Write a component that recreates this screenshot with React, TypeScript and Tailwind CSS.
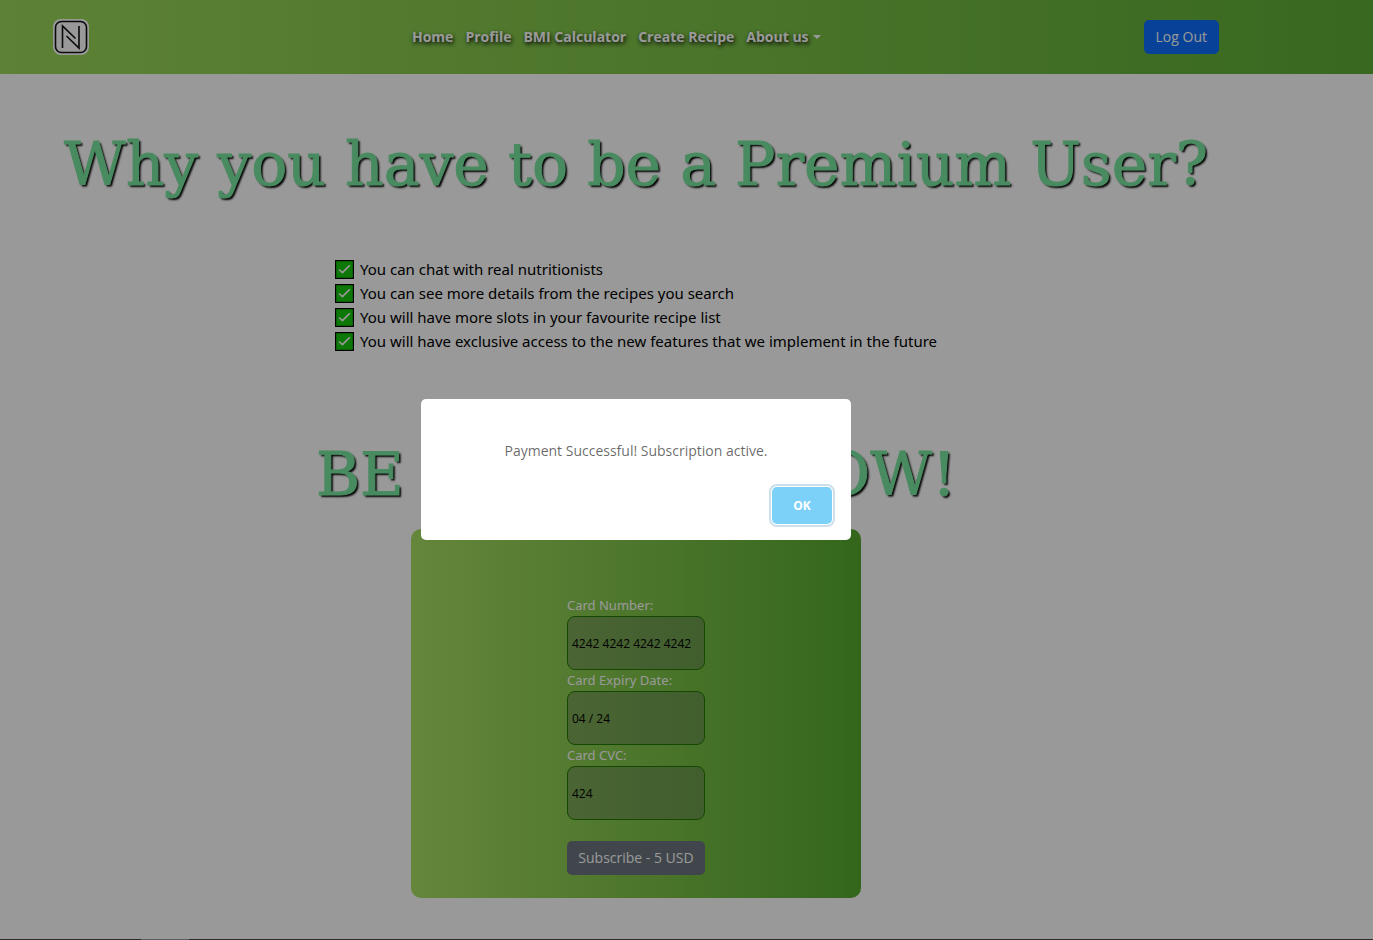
import type { ReactNode } from 'react';

const links = ['Home', 'Profile', 'BMI Calculator', 'Create Recipe'];

const benefits = [
  'You can chat with real nutritionists',
  'You can see more details from the recipes you search',
  'You will have more slots in your favourite recipe list',
  'You will have exclusive access to the new features that we implement in the future',
];

const fields = [
  { id: 'card-number', label: 'Card Number:', value: '4242 4242 4242 4242' },
  { id: 'card-expiry', label: 'Card Expiry Date:', value: '04 / 24' },
  { id: 'card-cvc', label: 'Card CVC:', value: '424' },
];

function Logo() {
  return (
    <svg viewBox="0 0 36 36" className="block size-9" aria-hidden="true">
      <rect x="0" y="0" width="36" height="36" rx="8" fill="#fff" />
      <rect x="2.5" y="2.5" width="31" height="31" rx="6" fill="none" stroke="#111" strokeWidth="1.6" />
      <path d="M9.5 29V7L22.5 19.5M26 7V29L13.5 17" fill="none" stroke="#111" strokeWidth="1.6" />
    </svg>
  );
}

function CheckIcon() {
  return (
    <svg viewBox="0 0 19 19" className="size-[19px] shrink-0" aria-hidden="true">
      <rect x="0.6" y="0.6" width="17.8" height="17.8" fill="#16c60c" stroke="#000" strokeWidth="1.2" />
      <path d="M4 9.5L7.4 12.6L14.8 5.4" fill="none" stroke="#fff" strokeWidth="1.5" />
    </svg>
  );
}

function Title({ children }: { children: ReactNode }) {
  return (
    <h1 className="text-center font-['DejaVu_Serif',serif] text-[60px] leading-[72px] whitespace-nowrap text-[#7be8a0] [-webkit-text-stroke:1px_#7be8a0] [text-shadow:2px_2px_2px_#000]">
      {children}
    </h1>
  );
}

export default function App() {
  return (
    <div className="min-h-screen bg-white font-['Open_Sans','Noto_Sans',sans-serif] text-sm text-[#212529]">
      <header className="bg-linear-to-r from-[#9bd959] to-[#5fae36] pr-[101px]">
        <nav className="flex h-[74px] items-center justify-between px-[53px]">
          <a href="#home" aria-label="Nutrition home">
            <Logo />
          </a>
          <ul className="flex gap-3 font-bold text-white [text-shadow:1px_2px_4px_#000]">
            {links.map((link) => (
              <li key={link}>
                <a href="#nav">{link}</a>
              </li>
            ))}
            <li>
              <button type="button" className="flex items-center gap-1 [text-shadow:inherit]">
                About us
                <svg viewBox="0 0 8 4" className="h-1 w-2" aria-hidden="true">
                  <path d="M0 0H8L4 4Z" fill="#fff" />
                </svg>
              </button>
            </li>
          </ul>
          <button type="button" className="h-[34px] rounded-[5px] bg-[#0d6efd] px-3 text-white">
            Log Out
          </button>
        </nav>
      </header>

      <main className="flex flex-col items-center pt-[54px] pr-[101px] pb-[42px]">
        <Title>Why you have to be a Premium User?</Title>

        <ul className="mt-[57px] font-['Noto_Sans',sans-serif] text-[15px] leading-6 text-black">
          {benefits.map((benefit) => (
            <li key={benefit} className="flex items-center gap-[6px]">
              <CheckIcon />
              {benefit}
            </li>
          ))}
        </ul>

        <div className="mt-[85px]">
          <Title>BE PREMIUM NOW!</Title>
        </div>

        <form className="mt-[19px] flex w-[450px] justify-center rounded-[10px] bg-linear-to-r from-[#a8e063] to-[#56ab2f] pt-[66px] pb-[23px]">
          <div className="flex w-[138px] flex-col">
            {fields.map((field) => (
              <div key={field.id} className="flex flex-col">
                <label
                  htmlFor={field.id}
                  className="font-['Noto_Sans',sans-serif] text-[13px] leading-[21px] whitespace-nowrap text-white"
                >
                  {field.label}
                </label>
                <input
                  id={field.id}
                  defaultValue={field.value}
                  className="h-[54px] w-full rounded-lg border border-[#237804] bg-[#606060]/35 px-1 text-xs text-black"
                />
              </div>
            ))}
            <button type="button" className="mt-[21px] h-[34px] rounded-[5px] bg-[#6c757d] whitespace-nowrap text-white">
              Subscribe - 5 USD
            </button>
          </div>
        </form>
      </main>

      <div className="fixed inset-0 flex items-center justify-center bg-black/40 pr-[101px] pb-px">
        <div role="dialog" aria-modal="true" aria-label="Payment status" className="w-[430px] rounded-[5px] bg-white px-[19px] pt-[42px] pb-4">
          <p className="text-center leading-5 text-black/60">Payment Successful! Subscription active.</p>
          <div className="mt-[26px] flex justify-end">
            <button
              type="button"
              className="h-[37px] w-[60px] rounded-[5px] bg-[#7cd1f9] text-xs font-bold text-white shadow-[0_0_0_1px_#fff,0_0_0_3px_#cddfed]"
            >
              OK
            </button>
          </div>
        </div>
      </div>

      <div className="fixed inset-x-0 bottom-0 flex h-px bg-[#2b2a33]">
        <span className="ml-[141px] w-12 bg-[#5b5b66]" />
      </div>
    </div>
  );
}
